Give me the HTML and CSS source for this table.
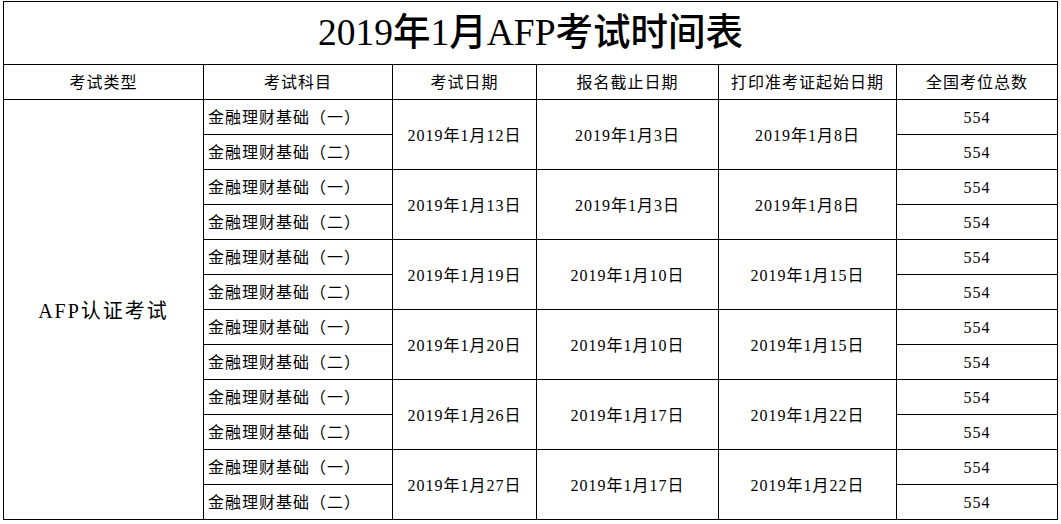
FILE: index.html
```html
<!DOCTYPE html>
<html lang="zh">
<head>
<meta charset="utf-8">
<title>2019年1月AFP考试时间表</title>
<link rel="stylesheet" href="styles.css">
</head>
<body>
<table class="sched">
  <colgroup>
    <col class="c1"><col class="c2"><col class="c3"><col class="c4"><col class="c5"><col class="c6">
  </colgroup>
  <tr class="title-row"><td colspan="6" class="title">2019年1月AFP考试时间表</td></tr>
  <tr class="head-row">
    <td>考试类型</td><td>考试科目</td><td>考试日期</td><td>报名截止日期</td><td>打印准考证起始日期</td><td>全国考位总数</td>
  </tr>
  <tr><td rowspan="12" class="type">AFP认证考试</td><td class="subj">金融理财基础（一）</td><td rowspan="2">2019年1月12日</td><td rowspan="2">2019年1月3日</td><td rowspan="2">2019年1月8日</td><td>554</td></tr>
  <tr><td class="subj">金融理财基础（二）</td><td>554</td></tr>
  <tr><td class="subj">金融理财基础（一）</td><td rowspan="2">2019年1月13日</td><td rowspan="2">2019年1月3日</td><td rowspan="2">2019年1月8日</td><td>554</td></tr>
  <tr><td class="subj">金融理财基础（二）</td><td>554</td></tr>
  <tr><td class="subj">金融理财基础（一）</td><td rowspan="2">2019年1月19日</td><td rowspan="2">2019年1月10日</td><td rowspan="2">2019年1月15日</td><td>554</td></tr>
  <tr><td class="subj">金融理财基础（二）</td><td>554</td></tr>
  <tr><td class="subj">金融理财基础（一）</td><td rowspan="2">2019年1月20日</td><td rowspan="2">2019年1月10日</td><td rowspan="2">2019年1月15日</td><td>554</td></tr>
  <tr><td class="subj">金融理财基础（二）</td><td>554</td></tr>
  <tr><td class="subj">金融理财基础（一）</td><td rowspan="2">2019年1月26日</td><td rowspan="2">2019年1月17日</td><td rowspan="2">2019年1月22日</td><td>554</td></tr>
  <tr><td class="subj">金融理财基础（二）</td><td>554</td></tr>
  <tr><td class="subj">金融理财基础（一）</td><td rowspan="2">2019年1月27日</td><td rowspan="2">2019年1月17日</td><td rowspan="2">2019年1月22日</td><td>554</td></tr>
  <tr><td class="subj">金融理财基础（二）</td><td>554</td></tr>
</table>
</body>
</html>
```
FILE: styles.css
```css
html, body {
  margin: 0;
  padding: 0;
  background: #fff;
}
body {
  padding: 1px 0 0 3px;
  font-family: "Liberation Serif", "Noto Sans CJK SC", serif;
  color: #000;
}
.sched {
  border-collapse: collapse;
  table-layout: fixed;
  width: 1054px;
}
.c1 { width: 200px; }
.c2 { width: 189px; }
.c3 { width: 144px; }
.c4 { width: 182px; }
.c5 { width: 178px; }
.c6 { width: 161px; }
.sched td {
  border: 1px solid #000;
  padding: 2px 0 0 0;
  height: 32px;
  text-align: center;
  vertical-align: middle;
  font-size: 16px;
  letter-spacing: 1px;
  white-space: nowrap;
  line-height: 20px;
}
.sched .title-row td {
  height: 62px;
  padding: 0;
  font-size: 37.5px;
  letter-spacing: 0;
  line-height: 44px;
  font-weight: 500;
}
.sched .subj {
  text-align: left;
  padding-left: 4px;
}
.sched .type {
  font-size: 20px;
  letter-spacing: 2px;
}
```
